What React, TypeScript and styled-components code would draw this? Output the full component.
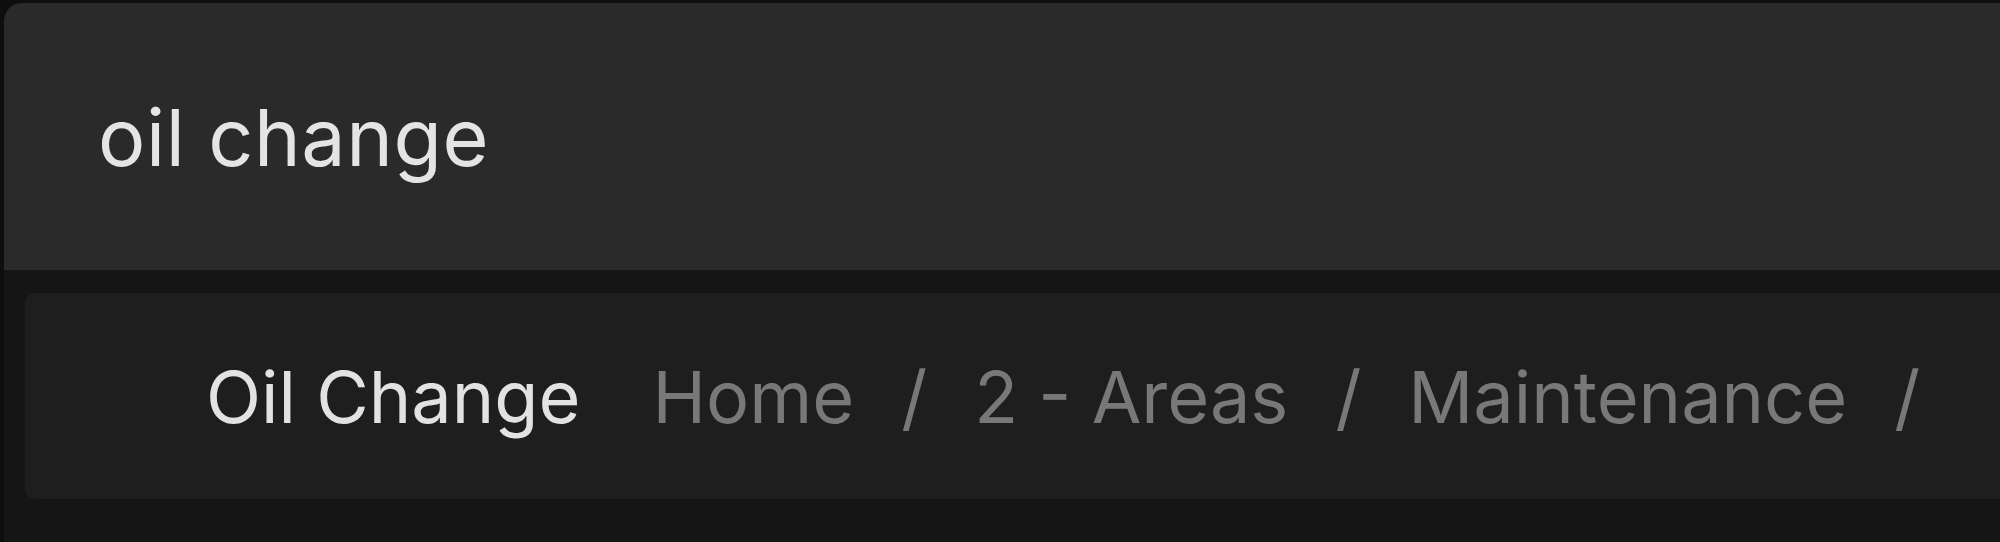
import React from "react";
import styled, { createGlobalStyle } from "styled-components";

const Global = createGlobalStyle`
  html, body {
    margin: 0;
    padding: 0;
    background: #0e0e0e;
    overflow: hidden;
  }
  body {
    font-family: Inter, "Noto Sans", sans-serif;
  }
`;

const Screen = styled.div`
  width: 2000px;
  height: 542px;
  padding: 3px 0 0 4px;
  box-sizing: border-box;
  overflow: hidden;
`;

const Modal = styled.div`
  width: 2040px;
  height: 600px;
  background: #151515;
  border-radius: 18px 18px 0 0;
  overflow: hidden;
  display: flex;
  flex-direction: column;
`;

const SearchBar = styled.div`
  height: 267px;
  background: #2a2a2a;
  display: flex;
  align-items: center;
  padding-left: 94px;
  box-sizing: border-box;
  font-size: 79px;
  color: #e4e4e4;
  letter-spacing: 0.6px;
`;

const Results = styled.div`
  padding: 23px 0 0 21px;
  display: flex;
  flex-direction: column;
`;

const ResultItem = styled.div`
  height: 206px;
  background: #1e1e1e;
  border-radius: 10px;
  display: flex;
  align-items: center;
  padding-left: 181px;
  box-sizing: border-box;
  font-size: 72px;
  white-space: nowrap;
`;

const Title = styled.span`
  color: #e2e2e2;
  margin-right: 72px;
`;

const Path = styled.span`
  color: #787878;
  display: flex;
  align-items: center;
`;

const Sep = styled.span`
  margin: 0 47px;
`;

export default function App() {
  const crumbs = ["Home", "2 - Areas", "Maintenance"];
  return (
    <>
      <Global />
      <Screen>
        <Modal>
          <SearchBar>oil change</SearchBar>
          <Results>
            <ResultItem>
              <Title>Oil Change</Title>
              <Path>
                {crumbs.map((c) => (
                  <React.Fragment key={c}>
                    <span>{c}</span>
                    <Sep>/</Sep>
                  </React.Fragment>
                ))}
              </Path>
            </ResultItem>
          </Results>
        </Modal>
      </Screen>
    </>
  );
}
